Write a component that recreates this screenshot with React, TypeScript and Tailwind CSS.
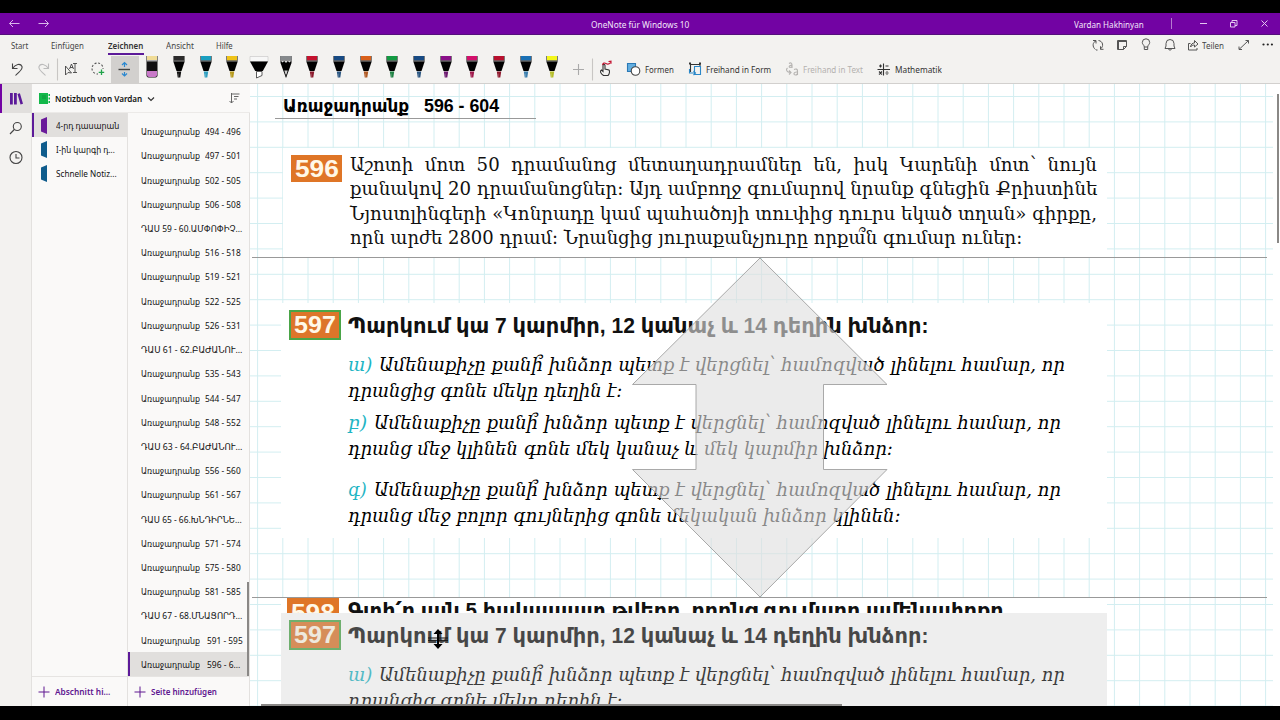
import { useLayoutEffect, useRef, useState } from "react";
import type { ReactNode } from "react";

const UI = "font-['Noto_Sans','DejaVu_Sans',sans-serif]";
const BOLD = "font-['Liberation_Sans','DejaVu_Sans',sans-serif] font-bold";
const SERIF = "font-['DejaVu_Serif',serif]";

/** One line of text, condensed or widened to fill the width of its box. */
function Fit({ className = "", children }: { className?: string; children: ReactNode }) {
  const box = useRef<HTMLDivElement>(null);
  const text = useRef<HTMLSpanElement>(null);
  const [scale, setScale] = useState(1);
  useLayoutEffect(() => {
    if (box.current && text.current && text.current.offsetWidth > 0) {
      setScale(box.current.clientWidth / text.current.offsetWidth);
    }
  }, []);
  return (
    <div ref={box} className={`shrink-0 whitespace-pre ${className}`}>
      <span ref={text} className="inline-block origin-left" style={{ transform: `scaleX(${scale})` }}>
        {children}
      </span>
    </div>
  );
}

/** Armenian question mark, set over the letter before it. */
function Accented({ text }: { text: string }) {
  const parts = text.split("՞");
  return (
    <>
      {parts[0]}
      {parts.length > 1 && (
        <>
          <span className="-ml-[7px]">՞</span>
          {parts[1]}
        </>
      )}
    </>
  );
}

function TitleBar() {
  return (
    <div className="flex h-[22px] shrink-0 items-center border-b border-[#55107c] bg-[#7203a3] text-[9.5px] text-[#f3e6fa]">
      <svg className="ml-[8px] h-3 w-11 text-[#d9b5ea]" viewBox="0 0 44 12" fill="none" stroke="currentColor" strokeWidth="1">
        <path d="M11.500 5.500H1.500M5 2 1.500 5.500 5 9M30.500 5.500h10M37 2l3.500 3.500L37 9" />
      </svg>
      <Fit className="ml-[539px] mt-[2px] w-[98px] leading-5">OneNote für Windows 10</Fit>
      <Fit className="ml-[385px] mt-[2px] w-[70px] leading-5">Vardan Hakhinyan</Fit>
      <div className="ml-[27px] h-[11px] w-px bg-[#b57bd0]" />
      <svg className="ml-[27px] h-3 w-[72px] text-[#e3c6f0]" viewBox="0 0 72 12" fill="none" stroke="currentColor" strokeWidth="1">
        <path d="M1 5.500h7M31.500 4.500h4.500v4.500h-4.500zM33 4.500V2.500h5v5H36M62.500 2.500l6 6M68.500 2.500l-6 6" />
      </svg>
    </div>
  );
}

function Tabs() {
  return (
    <div className="flex h-[21px] shrink-0 items-start text-[9.500px] leading-[21px] text-[#444]">
      <Fit className="ml-[11px] w-[17px]">Start</Fit>
      <Fit className="ml-[23px] w-[33px]">Einfügen</Fit>
      <div className="ml-[24px] h-5 w-[36px] border-b-2 border-[#5c1a99]">
        <Fit className="w-[35px] font-semibold text-[#333]">Zeichnen</Fit>
      </div>
      <Fit className="ml-[22px] w-[28px]">Ansicht</Fit>
      <Fit className="ml-[22px] w-[17px]">Hilfe</Fit>
      <svg className="ml-[858px] mt-[3px] h-[14px] w-[88px]" viewBox="0 0 88 14" fill="none" stroke="#555" strokeWidth="1">
        <path d="M4.500 11.500C1 9 1.500 4 5 3M2 2.500h3v3M7.500 2.500C12 3 13 8.500 9.500 11M12.500 11.300h-3v-3M5 12h1.500" />
        <path d="M26.500 2.500h9v6l-3 3h-6zM35.500 8.500h-3v3M27.500 2.500v9M26.500 3.500h9" />
        <path d="M53.300 9c0-2-2-2.500-2-4.500a3.700 3.700 0 0 1 7.400 0c0 2-2 2.500-2 4.500zM53.300 9v2.500h3.400V9" />
        <path d="M74 10.500h10L83 8V5.500a4 4 0 0 0-8 0V8zM77.500 11c.5 1.500 2.500 1.500 3 0" />
      </svg>
      <svg className="ml-[8px] mt-[4px] h-3 w-[12px]" viewBox="0 0 12 12" fill="none" stroke="#555" strokeWidth="1">
        <path d="M3.500 4.500h-2v6.500h8.500V9M3.500 8c.5-3 2-4 4-4V1.500L11 5 7.500 8V6C5.500 6 4.500 6.500 3.500 8z" />
      </svg>
      <Fit className="ml-[3px] w-[22px]">Teilen</Fit>
      <svg className="ml-[13px] mt-[4px] h-3 w-[36px]" viewBox="0 0 36 12" fill="none" stroke="#555" strokeWidth="1">
        <path d="M2 10.500 11.500 1.500M8.500 1.500h3v3M2 7.500v3h3" />
        <g fill="#222" stroke="none">
          <circle cx="26.500" cy="5.500" r="1.100" />
          <circle cx="30.800" cy="5.500" r="1.100" />
          <circle cx="34.900" cy="5.500" r="1.100" />
        </g>
      </svg>
    </div>
  );
}

const pens = [
  ["#2b2b2b", "#111"],
  ["#1a9fc0", "#2f9fc0"],
  ["#efc318", "#b79a1c"],
  ["hl", ""],
  ["pencil", ""],
  ["#c4122f", "#8c1a2c"],
  ["#174a83", "#2a5580"],
  ["#d9601a", "#b05a24"],
  ["#139a42", "#1f8244"],
  ["#174a83", "#2a5580"],
  ["#8a1089", "#6d1a70"],
  ["#d3106c", "#a01a4c"],
  ["#b8102e", "#8f1a2e"],
  ["#1b70b4", "#3c7fae"],
  ["#f4f71a", "#b5bd2a"],
];

function Pen({ top, tip }: { top: string; tip: string }) {
  return (
    <div className="flex w-[26.680px] shrink-0 justify-center">
      <svg className="h-[23px] w-[20px]" viewBox="0 0 20 23">
        {top === "hl" ? (
          <>
            <path d="M1 .5h18v5H1z" fill="#f7f7f7" stroke="#bbb" strokeWidth=".5" />
            <path d="M1 5.500h18L13.800 15H6.200z" fill="#000" />
            <path d="M7.500 15.500h5.500v4L7.500 22z" fill="#fff" stroke="#333" strokeWidth=".8" />
          </>
        ) : top === "pencil" ? (
          <>
            <path d="M4.500 0h11v7L10 22 4.500 7z" fill="#000" />
            <path d="M4.500 0h11v4.500h-11z" fill="#85898c" />
            <path d="m4.500 4.500 2 2 1.700-1.500L10 7l1.800-2 1.700 1.500 2-2z" fill="#ddd" />
            <path d="M8.300 14.500h3.400L10 20z" fill="#ccc" />
            <path d="M9.400 18h1.200L10 21.500z" fill="#222" />
          </>
        ) : (
          <>
            <path d="M4.500 0h11v6L12.500 15h-5L4.500 6z" fill="#000" />
            <path d="M5 0h10v4.500H5z" fill={top} />
            <path d="M4.700 4.500h10.600v1H4.700z" fill="#999" />
            <path d="M7.800 15.500h4.400l-.9 6h-2.600z" fill={tip} />
            <path d="M8.700 17.500h1v3.500h-1z" fill="#fff" opacity=".25" />
          </>
        )}
      </svg>
    </div>
  );
}

function Ribbon() {
  return (
    <div className="flex h-[28px] shrink-0 items-start border-b border-[#d2d0ce] text-[9.500px] leading-[27px] text-[#333]">
      <svg className="h-[27px] w-[111px] shrink-0" viewBox="0 0 111 27" fill="none" stroke="#444" strokeWidth="1.100">
        <path d="M12.500 7.500v5h5M12.500 12.500c3-4.500 8-5.500 9.500-2 1 3.500-3 5-6.500 9" />
        <path d="M48.500 7.500v5h-5M48.500 12.500c-3-4.500-8-5.500-9.500-2-1 3.500 3 5 6.500 9" stroke="#bbb" />
        <path d="M57.500 2.500v22" stroke="#c8c6c4" />
        <path d="M65.500 10v9l2.500-2.500 3.500.5zM69.500 13l2-5 2 5M70 11.500h3M73 7.500h4M75 7.500v9M73 16.500h4" strokeWidth=".9" />
        <circle cx="97.500" cy="12.500" r="5.500" strokeDasharray="2 1.700" stroke="#555" />
        <path d="M98 13h6.500v6.500H98z" fill="#f3f2f0" stroke="none" />
        <path d="M101.500 13.500v5.500M98.700 16.300h5.500" stroke="#1fa34a" strokeWidth="1.300" />
      </svg>
      <div className="flex h-[27px] w-[28px] shrink-0 items-center justify-center bg-[#d2d0ce]">
        <svg className="-ml-[2px] -mt-[2px] h-4 w-4" viewBox="0 0 16 16" fill="none" strokeWidth="1.200">
          <path d="M2.500 8.500h11.500" stroke="#444" strokeWidth="1.400" />
          <path d="M8.500 1.500V6M6 4l2.500-2.500L11 4M8.500 11v4M6 12.500l2.500 2.500L11 12.500" stroke="#2b88d0" />
        </svg>
      </div>
      <svg className="h-[23px] w-[26px] shrink-0" viewBox="0 0 26 23">
        <path d="M7.500 0h11v19.500q0 2-2 2h-7q-2 0-2-2z" fill="#111" />
        <path d="M8 0h10v4H8z" fill="#f0dc96" />
        <path d="M8 4h10v1.500H8z" fill="#aaa" />
        <path d="M8 15h10v4q0 2-2 2h-6q-2 0-2-2z" fill="#c879c8" />
      </svg>
      <div className="flex shrink-0 pl-[0.500px]">
        {pens.map(([top, tip], i) => (
          <Pen key={i} top={top} tip={tip} />
        ))}
      </div>
      <svg className="h-[27px] w-[56px] shrink-0" viewBox="0 0 56 27" fill="none" strokeWidth="1.100">
        <path d="M7 13.500h11M12.500 8v11" stroke="#aaa" />
        <path d="M26.500 2.500v22" stroke="#c8c6c4" />
        <path d="M37.500 19.500c-3-2-4-4.500-2-5.500l1.500 1.500V9.500c0-1.500 2-1.500 2 0V13l4 1c1 1 .5 4-1 5.500z" stroke="#333" />
        <path d="M36.500 9c.5-2 2-2.500 3.500-1.500s3 1 4.500-1M42.500 5.500l2.500-.3v2.500" stroke="#c4122f" />
      </svg>
      <svg className="ml-[4px] h-[27px] w-[16px] shrink-0" viewBox="0 0 16 27" fill="none" strokeWidth="1.100">
        <path d="M1.500 7.500h8v8h-8z" fill="#62aee0" stroke="#2b79b5" />
        <circle cx="9.500" cy="15" r="4.300" fill="#fff" stroke="#444" />
      </svg>
      <Fit className="ml-[3px] w-[29px]">Formen</Fit>
      <svg className="ml-[14px] h-[27px] w-[15px] shrink-0" viewBox="0 0 15 27" fill="none" strokeWidth="1.100">
        <path d="M2 8.500h10M2.500 7v9M12 7v3" stroke="#333" />
        <path d="M1 7.500h2M11 7.500h2" stroke="#333" strokeWidth="2" />
        <path d="M6.500 10.500h6v8h-6zM1.500 13v4h6M5.500 15l2 2-2 2" stroke="#2b88c8" />
      </svg>
      <Fit className="ml-[3px] w-[65px]">Freihand in Form</Fit>
      <svg className="ml-[14px] h-[27px] w-[14px] shrink-0" viewBox="0 0 14 27" fill="none" stroke="#b5b3b1" strokeWidth="1.100">
        <path d="M4 7.500c2-1.500 3 0 3 1.500v3M7 9.500c-3-.5-3.500 2-2 2 1 0 2-.5 2-1.500M2.500 12c-2 1.500-1 4.500 3 4.500M4 14.500l2 2-2 2M9 13.500c2-1 3.500-.5 3.500 1.500v4M12.500 16c-4-.5-4.500 3-2 3 1 0 2-.5 2-2" />
      </svg>
      <Fit className="ml-[4px] w-[60px] text-[#b3b1af]">Freihand in Text</Fit>
      <svg className="ml-[14px] h-[27px] w-[14px] shrink-0" viewBox="0 0 14 27" fill="none" stroke="#333" strokeWidth="1.100">
        <path d="M.5 13.500h12.500M6.500 7.500v12M2 10h3M3.500 8.500v3M8.500 10h3M2 15.500l3 3M5 15.500l-3 3M8.500 17h3M10 15v.8M10 18.200v.8" />
      </svg>
      <Fit className="ml-[4px] w-[47px]">Mathematik</Fit>
    </div>
  );
}

const TASK = "Առաջադրանք";
const pages = [
  "494 - 496", "497 - 501", "502 - 505", "506 - 508", "ԴԱՍ 59 - 60.ԱՄՓՈՓԻՉ...", "516 - 518", "519 - 521", "522 - 525",
  "526 - 531", "ԴԱՍ 61 - 62.ԲԱԺԱՆՈՒ...", "535 - 543", "544 - 547", "548 - 552", "ԴԱՍ 63 - 64.ԲԱԺԱՆՈՒ...", "556 - 560", "561 - 567",
  "ԴԱՍ 65 - 66.ԽՆԴԻՐՆԵ...", "571 - 574", "575 - 580", "581 - 585", "ԴԱՍ 67 - 68.ՄՆԱՑՈՐԴ...", "591 - 595", "596 - 6...",
];

function PageRow({ label, index }: { label: string; index: number }) {
  const selected = index === pages.length - 1;
  const wide = index >= pages.length - 2;
  return (
    <div
      className={`flex h-[24.220px] shrink-0 items-center border-l-2 pl-[11px] pt-[1px] leading-[23px] ${
        selected ? "border-[#5c1a99] bg-[#e1dfdd]" : "border-transparent"
      }`}
    >
      {label.startsWith("ԴԱՍ") ? (
        <Fit className="w-[101px]">{label}</Fit>
      ) : (
        <>
          <Fit className="w-[59px]">{TASK}</Fit>
          <Fit className={wide ? (selected ? "ml-[7px] w-[33px]" : "ml-[7px] w-[36px]") : "ml-[5px] w-[36px]"}>{label}</Fit>
        </>
      )}
    </div>
  );
}

function AddButton({ children, width }: { children: string; width: string }) {
  return (
    <div className="flex h-[30px] shrink-0 items-center border-t border-[#e6e4e2] pl-[6px] font-semibold text-[#5f1790]">
      <svg className="h-3 w-3 shrink-0" viewBox="0 0 12 12" stroke="currentColor" strokeWidth="1">
        <path d="M.5 6h11M6 .5v11" />
      </svg>
      <Fit className={`ml-[5px] mt-[1px] leading-6 ${width}`}>{children}</Fit>
    </div>
  );
}

function SectionRow({ label, color, width, selected = false }: { label: string; color: string; width: string; selected?: boolean }) {
  return (
    <div className={`flex h-[24.200px] shrink-0 items-center border-l-2 pl-[7px] ${selected ? "border-[#5c1a99] bg-[#e1dfdd]" : "border-transparent"}`}>
      <svg className="h-[17px] w-[7px]" viewBox="0 0 7 17">
        <path d="M6 0v17L0 14.500V2.500z" fill={color} />
      </svg>
      <Fit className={`ml-[8px] mt-[1px] leading-6 ${width}`}>{label}</Fit>
    </div>
  );
}

function Navigation() {
  return (
    <div className="flex w-[250px] shrink-0 text-[9.500px] text-[#111]">
      <div className="flex w-[32px] shrink-0 flex-col border-r border-[#e3e1df] bg-[#f3f2f0]">
        <div className="flex h-[29px] items-center justify-center border-l-2 border-[#7203a3] bg-[#e1dfdd]">
          <svg className="h-3 w-[13px]" viewBox="0 0 13 12" fill="#5c1a99">
            <path d="M0 0h2.800v11.500H0zM4 0h2.800v11.500H4zM7.500 1l2.400-.8L13 10.700l-2.500.8z" />
          </svg>
        </div>
        <svg className="mt-[8px] h-[44px] w-[32px]" viewBox="0 0 32 44" fill="none" stroke="#444" strokeWidth="1.100">
          <circle cx="17.300" cy="5.500" r="4" />
          <path d="m14.300 8.500-4.300 4.500" />
          <circle cx="16" cy="36.500" r="6" />
          <path d="M16 33v4h3.500" />
        </svg>
      </div>
      <div className="flex w-[218px] flex-col bg-[#faf9f8]">
        <div className="flex h-[29px] shrink-0 items-center border-b border-[#eceae8]">
          <svg className="ml-[7px] h-[11px] w-[11px]" viewBox="0 0 11 11">
            <path d="M0 0h9v11H0z" fill="#13b84a" />
            <path d="M9.500 1H11v2H9.500zM9.500 4.500H11v2H9.500zM9.500 8H11v2H9.500z" fill="#13b84a" />
            <path d="M3 3h4M3 5h4" stroke="#0a8f36" strokeWidth=".8" />
          </svg>
          <Fit className="ml-[5px] mt-[1px] w-[87px] font-semibold leading-7">Notizbuch von Vardan</Fit>
          <svg className="ml-[5px] mt-[1px] h-2 w-2" viewBox="0 0 8 8" fill="none" stroke="#333" strokeWidth="1.200">
            <path d="m1 2.500 3 3 3-3" />
          </svg>
          <svg className="ml-[74px] h-[11px] w-[11px]" viewBox="0 0 11 11" fill="none" stroke="#666" strokeWidth="1">
            <path d="M2.500 0v10M.5 8l2 2 2-2M3 1h7.500M5 3.500h4.500M5 6h3" />
          </svg>
        </div>
        <div className="flex h-[593px]">
          <div className="flex w-[95px] shrink-0 flex-col justify-between">
            <div className="flex flex-col">
              <SectionRow label="4-րդ դասարան" color="#6a1b9a" width="w-[63px]" selected />
              <SectionRow label="I-ին կարգի դ..." color="#0f5c8c" width="w-[59px]" />
              <SectionRow label="Schnelle Notiz..." color="#0f5c8c" width="w-[61px]" />
            </div>
            <AddButton width="w-[55px]">Abschnitt hi...</AddButton>
          </div>
          <div className="flex w-[123px] shrink-0 flex-col justify-between border-x border-[#e3e1df]">
            <div className="relative flex flex-col pt-[6px]">
              {pages.map((p, i) => (
                <PageRow key={i} label={p} index={i} />
              ))}
              <div className="absolute bottom-0 right-0 h-[94px] w-[2px] bg-[#8a8886]" />
            </div>
            <AddButton width="w-[66px]">Seite hinzufügen</AddButton>
          </div>
        </div>
      </div>
    </div>
  );
}

function Grid() {
  return (
    <svg className="absolute left-0 top-0 h-[623px] w-[1030px]" viewBox="250 84 1030 623" strokeWidth="1">
      {Array.from({ length: 41 }, (_, i) => (
        <path key={i} d={`M${257.6 + i * 25.2} 84V707`} stroke="#d3eef1" />
      ))}
      {Array.from({ length: 25 }, (_, i) => (
        <path key={i} d={`M250 ${96.5 + i * 25.4}H1273`} stroke="#d3eef1" />
      ))}
    </svg>
  );
}

function Question({ mark, markWidth, first, firstWidth, second, secondWidth, indent }: {
  mark: string; markWidth: string; first: string; firstWidth: string; second: string; secondWidth: string; indent: string;
}) {
  return (
    <div className={`flex flex-col text-[19px] italic leading-[26px] text-black ${SERIF}`}>
      <div className="flex">
        <Fit className={`text-[#1fb5c4] ${markWidth}`}>{mark}</Fit>
        <Fit className={`${indent} ${firstWidth}`}>
          <Accented text={first} />
        </Fit>
      </div>
      <Fit className={secondWidth}>{second}</Fit>
    </div>
  );
}

/** Card for exercise 597; its top edge is 7px above the number badge. */
function Exercise597() {
  return (
    <div className="flex w-[826px] items-start pl-[8px] pt-[7px]">
      <div className={`flex h-[30px] w-[52px] shrink-0 items-center justify-center border-2 border-[#4aa548] bg-[#dd752a] text-[24.500px] text-[#fff8e8] ${BOLD}`}>
        <Fit className="w-[42px] leading-[28px]">597</Fit>
      </div>
      <div className="ml-[7px] flex flex-col">
        <Fit className={`w-[580px] text-[22px] leading-[31px] text-[#111] ${BOLD}`}>Պարկում կա 7 կարմիր, 12 կանաչ և 14 դեղին խնձոր:</Fit>
        <div className="mt-[10px]">
          <Question mark="ա)" markWidth="w-[24px]" indent="ml-[7px]"
            first="Ամենաքիչը քանի՞ խնձոր պետք է վերցնել՝ համոզված լինելու համար, որ" firstWidth="w-[686px]"
            second="դրանցից գոնե մեկը դեղին է:" secondWidth="w-[274px]" />
        </div>
        <div className="mt-[6px]">
          <Question mark="բ)" markWidth="w-[19px]" indent="ml-[7px]"
            first="Ամենաքիչը քանի՞ խնձոր պետք է վերցնել՝ համոզված լինելու համար, որ" firstWidth="w-[687px]"
            second="դրանց մեջ կլինեն գոնե մեկ կանաչ և մեկ կարմիր խնձոր:" secondWidth="w-[545px]" />
        </div>
        <div className="mt-[15px]">
          <Question mark="գ)" markWidth="w-[19px]" indent="ml-[7px]"
            first="Ամենաքիչը քանի՞ խնձոր պետք է վերցնել՝ համոզված լինելու համար, որ" firstWidth="w-[687px]"
            second="դրանց մեջ բոլոր գույներից գոնե մեկական խնձոր կլինեն:" secondWidth="w-[553px]" />
        </div>
      </div>
    </div>
  );
}

function Canvas() {
  return (
    <div className="relative h-[622px] w-[1030px] shrink-0 overflow-hidden bg-white">
      <Grid />
      <div className={`absolute left-[25px] top-[10px] flex h-[25px] w-[261px] items-center border-b border-[#999] pl-[8px] text-[18px] leading-[24px] text-black ${BOLD}`}>
        <Fit className="w-[126px]">Առաջադրանք</Fit>
        <Fit className="ml-[15px] w-[75px]">596 - 604</Fit>
      </div>

      <div className="absolute left-[33px] top-[64px] flex h-[109px] w-[824px] items-start bg-white pl-[8px] pt-[4px]">
        <div className={`mt-[3px] flex h-[27px] w-[51px] shrink-0 items-center justify-center bg-[#df7526] text-[24.500px] text-[#fff8e8] ${BOLD}`}>
          <Fit className="w-[44px] leading-[27px]">596</Fit>
        </div>
        <div className={`ml-[8px] flex flex-col text-[19px] leading-[24.400px] text-[#111] ${SERIF}`}>
          <Fit className="w-[747px] [word-spacing:6px]">Աշոտի մոտ 50 դրամանոց մետաղադրամներ են, իսկ Կարենի մոտ՝ նույն</Fit>
          <Fit className="w-[747px]">քանակով 20 դրամանոցներ: Այդ ամբողջ գումարով նրանք գնեցին Քրիստինե</Fit>
          <Fit className="w-[747px]">Նյոստլինգերի «Կոնրադը կամ պահածոյի տուփից դուրս եկած տղան» գիրքը,</Fit>
          <Fit className="w-[672px]">
            <Accented text="որն արժե 2800 դրամ: Նրանցից յուրաքանչյուրը որքա՞ն գումար ուներ:" />
          </Fit>
        </div>
      </div>

      <div className="absolute left-[31px] top-[219px] h-[235px] bg-white">
        <Exercise597 />
      </div>

      <div className="absolute left-[2px] top-[173px] h-px w-[1015px] bg-[#999]" />

      <div className="absolute left-[31px] top-[513px] flex h-[17px] w-[826px] items-start overflow-hidden bg-white pl-[6px]">
        <div className={`flex h-[30px] w-[52px] shrink-0 items-center justify-center bg-[#df7526] pt-[1px] text-[24.500px] text-[#fff8e8] ${BOLD}`}>
          <Fit className="w-[44px] leading-[27px]">598</Fit>
        </div>
        <Fit className={`ml-[9px] w-[656px] text-[22px] leading-[28px] text-[#111] ${BOLD}`}>Գտի՛ր այն 5 հակապատ թվերը, որոնց գումարը ամենափոքր</Fit>
      </div>
      <div className="absolute left-[2px] top-[513px] h-px w-[1015px] bg-[#999]" />

      <svg className="absolute left-[382px] top-[173px] h-[341px] w-[256px]" viewBox="632 257 256 341">
        <path d="M760 258 887 384.500H823.500V469.500H887L760 597 632.500 469.500H696V384.500H632.500z" fill="#dfdfdf" fillOpacity=".61" stroke="#a0a0a0" strokeWidth=".9" />
      </svg>

      <div className="absolute left-[31px] top-[529px] h-[93px] overflow-hidden bg-white">
        <Exercise597 />
        <div className="absolute inset-0 bg-[#c8c8c8]/30" />
      </div>
      <svg className="absolute left-[178px] top-[545px] h-[20px] w-[20px]" viewBox="0 0 20 20">
        <path d="M0 9h20M0 11.300h20" stroke="#111" strokeWidth="1" />
        <path d="m10 0 4.500 5H11v10h3.500L10 20l-4.500-5H9V5H5.500z" fill="#000" />
      </svg>

      <div className="absolute left-[11px] top-[620px] h-[2px] w-[581px] bg-[#8a8886]" />
      <div className="absolute left-[1027px] top-[10px] h-[149px] w-[2px] bg-[#8a8886]" />
    </div>
  );
}

export default function App() {
  return (
    <div className={`flex h-[720px] w-[1280px] flex-col overflow-hidden bg-black pt-[13px] ${UI}`}>
      <TitleBar />
      <div className="flex shrink-0 flex-col bg-[#f3f2f0]">
        <Tabs />
        <Ribbon />
      </div>
      <div className="flex h-[622px] shrink-0">
        <Navigation />
        <Canvas />
      </div>
    </div>
  );
}
